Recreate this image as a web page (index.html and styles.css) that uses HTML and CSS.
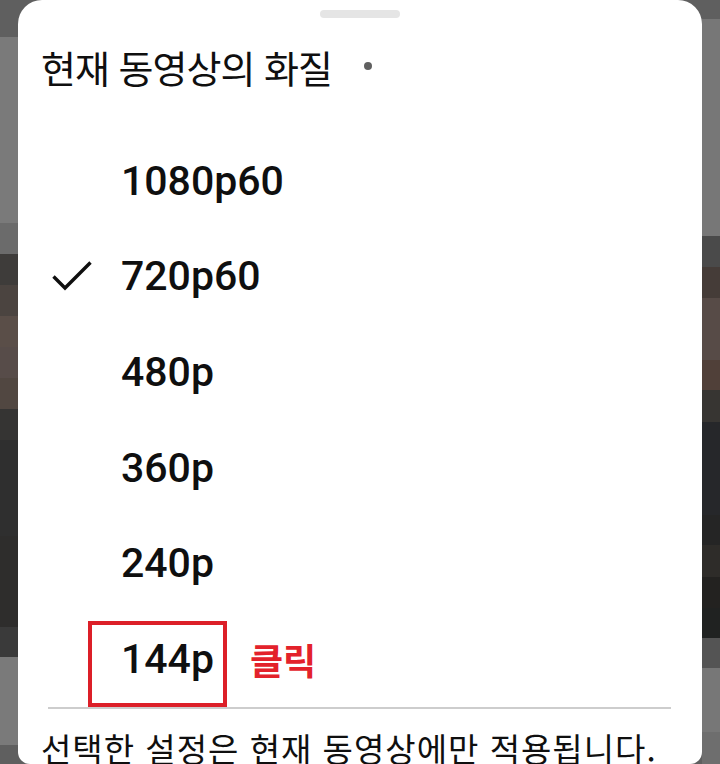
FILE: index.html
```html
<!DOCTYPE html>
<html lang="ko">
<head>
<meta charset="utf-8">
<title>현재 동영상의 화질</title>
<link rel="stylesheet" href="styles.css">
</head>
<body>
<div class="screen">
  <div class="strip strip-left"></div>
  <div class="sheet">
    <div class="handle"></div>
    <div class="title"><span class="title-text">현재 동영상의 화질</span><span class="dot"></span></div>
    <ul class="options">
      <li class="option"><span class="check"></span><span class="label">1080p60</span></li>
      <li class="option"><span class="check"><svg viewBox="0 0 40 32" width="40" height="32"><path d="M1.5 16.5 L13 28 L38.5 2.5" fill="none" stroke="#0f0f0f" stroke-width="3.4"/></svg></span><span class="label">720p60</span></li>
      <li class="option"><span class="check"></span><span class="label">480p</span></li>
      <li class="option"><span class="check"></span><span class="label">360p</span></li>
      <li class="option"><span class="check"></span><span class="label">240p</span></li>
      <li class="option"><span class="check"></span><span class="label label-boxed">144p</span><span class="note">클릭</span></li>
    </ul>
    <div class="divider"></div>
    <p class="footer">선택한 설정은 현재 동영상에만 적용됩니다.</p>
  </div>
  <div class="strip strip-right"></div>
</div>
</body>
</html>
```
FILE: styles.css
```css
html, body {
  margin: 0;
  padding: 0;
}
body {
  background: #5f5f5f;
  font-family: "Noto Sans CJK KR", "Noto Sans", sans-serif;
  color: #0f0f0f;
}
.screen {
  display: flex;
  width: 720px;
  height: 764px;
  overflow: hidden;
}
.strip {
  width: 18px;
  flex: none;
}
.strip-left {
  background: linear-gradient(to bottom,
    #5f5f5f 0 37px, #7a7a7a 37px 223px, #6b6b6b 223px 254px,
    #3e3c3a 254px 285px, #4b4440 285px 316px, #5a4e48 316px 347px,
    #574c49 347px 378px, #514741 378px 409px, #353433 409px 440px,
    #2f2f2f 440px 536px, #2e2d2c 536px 627px, #3a3a3a 627px 657px,
    #7a7a7a 657px 745px, #5f5f5f 745px 764px);
}
.strip-right {
  background: linear-gradient(to bottom,
    #5f5f5f 0 19px, #777777 19px 236px, #4a4a4a 236px 267px,
    #453c38 267px 298px, #574b47 298px 360px, #504039 360px 390px,
    #373532 390px 422px, #26272a 422px 515px, #252525 515px 545px,
    #2e2c29 545px 577px, #232220 577px 608px, #202221 608px 638px,
    #545454 638px 668px, #777777 668px 732px, #6e6e6e 732px 764px);
}
.sheet {
  width: 684px;
  flex: none;
  height: 764px;
  background: #ffffff;
  border-radius: 24px 24px 12px 12px;
  padding-top: 10px;
  box-sizing: border-box;
}
.handle {
  width: 80px;
  height: 8px;
  border-radius: 4px;
  background: #e5e5e5;
  margin: 0 auto;
}
.title {
  display: flex;
  align-items: center;
  margin-top: 26px;
  padding-left: 23px;
  height: 46px;
}
.title-text {
  font-size: 38px;
  line-height: 46px;
  letter-spacing: -1px;
}
.dot {
  width: 8px;
  height: 8px;
  border-radius: 50%;
  background: #606060;
  margin-left: 32px;
  margin-top: -2px;
}
.options {
  list-style: none;
  margin: 43px 0 0;
  padding: 0;
}
.option {
  display: flex;
  align-items: center;
  height: 95.6px;
  padding-left: 34px;
}
.check {
  width: 40px;
  height: 32px;
  flex: none;
  margin-right: 29px;
}
.check svg {
  display: block;
}
.label {
  font-family: Roboto, "Liberation Sans", sans-serif;
  font-weight: 500;
  font-size: 41px;
  color: #0f0f0f;
}
.label-boxed {
  position: relative;
}
.label-boxed::before {
  content: "";
  position: absolute;
  left: -33px;
  right: -13px;
  top: -14px;
  bottom: -24px;
  border: 4px solid #dc1f28;
}
.note {
  margin-left: 36px;
  font-size: 36px;
  font-weight: 700;
  color: #e3222b;
  line-height: 48px;
}
.divider {
  height: 2px;
  background: #cdcdcd;
  margin: 0 31px 0 30px;
}
.footer {
  margin: 17px 0 0;
  padding-left: 23px;
  font-size: 33px;
  line-height: 44px;
  letter-spacing: 1px;
  white-space: nowrap;
}
```
